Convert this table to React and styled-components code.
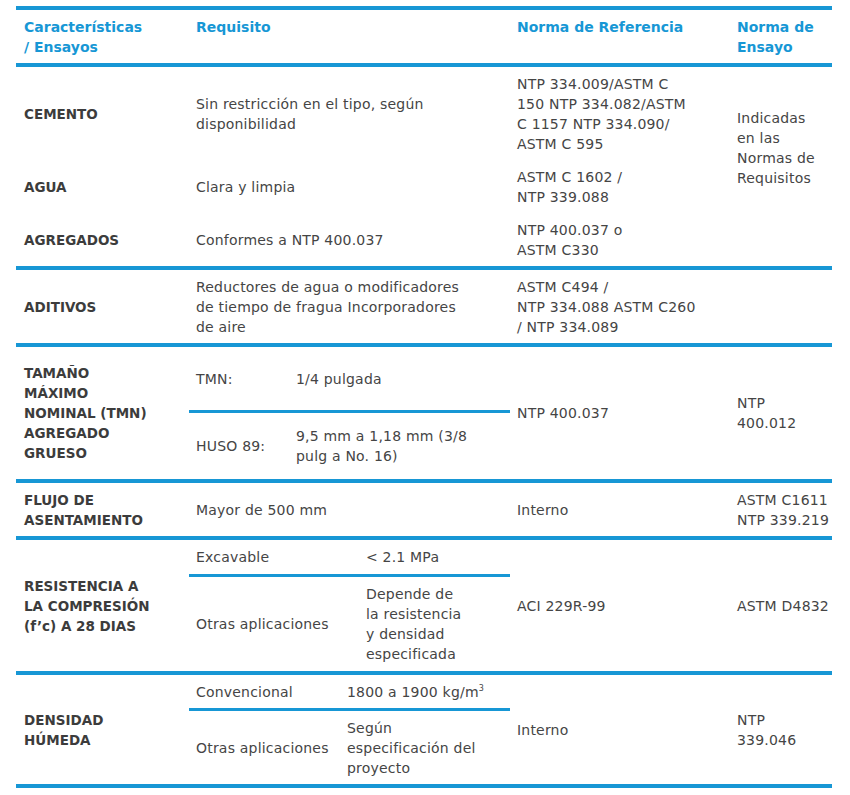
import styled, { createGlobalStyle } from "styled-components";

const BLUE = "#1797d5";
const TEXT = "#454545";

const GlobalStyle = createGlobalStyle`
  body {
    margin: 0;
    background: #fff;
    font-family: "DejaVu Sans", "Liberation Sans", sans-serif;
  }
`;

const Table = styled.div`
  width: 816px;
  margin: 6px 0 0 16px;
  border-top: 4px solid ${BLUE};
`;

const Row = styled.div`
  display: grid;
  grid-template-columns: 173px 321px 220px 102px;
  border-bottom: 4px solid ${BLUE};
`;

const Cell = styled.div`
  display: flex;
  align-items: ${(p) => (p.$top ? "flex-start" : "center")};
  padding: ${(p) => p.$pt ?? 6.5}px 7px ${(p) => p.$pb ?? 6.5}px;
  grid-row: ${(p) => (p.$span ? `span ${p.$span}` : "auto")};
  font-size: 14px;
  line-height: 20px;
  letter-spacing: 0.2px;
  color: ${TEXT};
  white-space: nowrap;
`;

const Label = styled(Cell)`
  padding-left: 8px;
  font-size: 13.5px;
  font-weight: bold;
  letter-spacing: 0;
  color: #3c3c3c;
`;

const HeadCell = styled(Cell)`
  align-items: flex-start;
  font-weight: bold;
  letter-spacing: 0;
  color: ${BLUE};
`;

const Txt = styled.span`
  display: block;
`;

const SubTable = styled.div`
  display: grid;
  grid-template-rows: ${(p) => p.$rows || "auto 1fr"};
`;

const SubRow = styled.div`
  display: grid;
  grid-template-columns: ${(p) => p.$label}px 1fr;
  align-items: center;
  padding: ${(p) => p.$py}px 0;
  border-bottom: ${(p) => (p.$line ? `3px solid ${BLUE}` : "none")};
`;

const SubCell = styled.span`
  display: block;
  padding: 0 7px;
  font-size: 14px;
  line-height: 20px;
  letter-spacing: 0.2px;
  color: ${TEXT};
  white-space: nowrap;
`;

const Sup = styled.sup`
  font-size: 8px;
  line-height: 0;
  vertical-align: 6px;
`;

const App = () => (
  <>
    <GlobalStyle />
    <Table>
      <Row>
        <HeadCell style={{ paddingLeft: 8 }}>
          <Txt>
            Características
            <br />/ Ensayos
          </Txt>
        </HeadCell>
        <HeadCell>
          <Txt>Requisito</Txt>
        </HeadCell>
        <HeadCell>
          <Txt>Norma de Referencia</Txt>
        </HeadCell>
        <HeadCell>
          <Txt>
            Norma de
            <br />
            Ensayo
          </Txt>
        </HeadCell>
      </Row>

      <Row>
        <Label>
          <Txt>CEMENTO</Txt>
        </Label>
        <Cell>
          <Txt>
            Sin restricción en el tipo, según
            <br />
            disponibilidad
          </Txt>
        </Cell>
        <Cell>
          <Txt>
            NTP 334.009/ASTM C<br />
            150 NTP 334.082/ASTM
            <br />C 1157 NTP 334.090/
            <br />
            ASTM C 595
          </Txt>
        </Cell>
        <Cell $span={3} $top $pt={41}>
          <Txt>
            Indicadas
            <br />
            en las
            <br />
            Normas de
            <br />
            Requisitos
          </Txt>
        </Cell>
        <Label>
          <Txt>AGUA</Txt>
        </Label>
        <Cell>
          <Txt>Clara y limpia</Txt>
        </Cell>
        <Cell>
          <Txt>
            ASTM C 1602 /<br />
            NTP 339.088
          </Txt>
        </Cell>
        <Label>
          <Txt>AGREGADOS</Txt>
        </Label>
        <Cell>
          <Txt>Conformes a NTP 400.037</Txt>
        </Cell>
        <Cell>
          <Txt>
            NTP 400.037 o<br />
            ASTM C330
          </Txt>
        </Cell>
      </Row>

      <Row>
        <Label>
          <Txt>ADITIVOS</Txt>
        </Label>
        <Cell>
          <Txt>
            Reductores de agua o modificadores
            <br />
            de tiempo de fragua Incorporadores
            <br />
            de aire
          </Txt>
        </Cell>
        <Cell>
          <Txt>
            ASTM C494 /<br />
            NTP 334.088 ASTM C260
            <br />/ NTP 334.089
          </Txt>
        </Cell>
        <Cell />
      </Row>

      <Row>
        <Label $pt={16} $pb={16}>
          <Txt>
            TAMAÑO
            <br />
            MÁXIMO
            <br />
            NOMINAL (TMN)
            <br />
            AGREGADO
            <br />
            GRUESO
          </Txt>
        </Label>
        <SubTable $rows="1fr 1fr">
          <SubRow $label={100} $py={0} $line>
            <SubCell>TMN:</SubCell>
            <SubCell>1/4 pulgada</SubCell>
          </SubRow>
          <SubRow $label={100} $py={0}>
            <SubCell>HUSO 89:</SubCell>
            <SubCell>
              9,5 mm a 1,18 mm (3/8
              <br />
              pulg a No. 16)
            </SubCell>
          </SubRow>
        </SubTable>
        <Cell>
          <Txt>NTP 400.037</Txt>
        </Cell>
        <Cell>
          <Txt>
            NTP
            <br />
            400.012
          </Txt>
        </Cell>
      </Row>

      <Row>
        <Label>
          <Txt>
            FLUJO DE
            <br />
            ASENTAMIENTO
          </Txt>
        </Label>
        <Cell>
          <Txt>Mayor de 500 mm</Txt>
        </Cell>
        <Cell>
          <Txt>Interno</Txt>
        </Cell>
        <Cell>
          <Txt>
            ASTM C1611
            <br />
            NTP 339.219
          </Txt>
        </Cell>
      </Row>

      <Row>
        <Label>
          <Txt>
            RESISTENCIA A<br />
            LA COMPRESIÓN
            <br />
            (f’c) A 28 DIAS
          </Txt>
        </Label>
        <SubTable>
          <SubRow $label={170} $py={7} $line>
            <SubCell>Excavable</SubCell>
            <SubCell>&lt; 2.1 MPa</SubCell>
          </SubRow>
          <SubRow $label={170} $py={7}>
            <SubCell>Otras aplicaciones</SubCell>
            <SubCell>
              Depende de
              <br />
              la resistencia
              <br />y densidad
              <br />
              especificada
            </SubCell>
          </SubRow>
        </SubTable>
        <Cell>
          <Txt>ACI 229R-99</Txt>
        </Cell>
        <Cell>
          <Txt>ASTM D4832</Txt>
        </Cell>
      </Row>

      <Row>
        <Label>
          <Txt>
            DENSIDAD
            <br />
            HÚMEDA
          </Txt>
        </Label>
        <SubTable>
          <SubRow $label={151} $py={6.5} $line>
            <SubCell>Convencional</SubCell>
            <SubCell>
              1800 a 1900 kg/m<Sup>3</Sup>
            </SubCell>
          </SubRow>
          <SubRow $label={151} $py={6.5}>
            <SubCell>Otras aplicaciones</SubCell>
            <SubCell>
              Según
              <br />
              especificación del
              <br />
              proyecto
            </SubCell>
          </SubRow>
        </SubTable>
        <Cell>
          <Txt>Interno</Txt>
        </Cell>
        <Cell>
          <Txt>
            NTP
            <br />
            339.046
          </Txt>
        </Cell>
      </Row>
    </Table>
  </>
);

export default App;
